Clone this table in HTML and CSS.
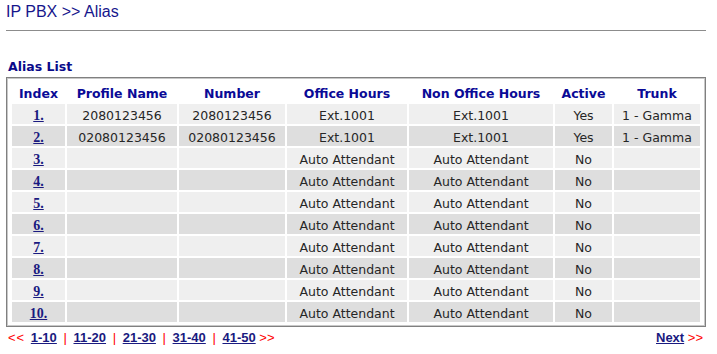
FILE: index.html
```html
<!DOCTYPE html>
<html>
<head>
<meta charset="utf-8">
<title>IP PBX &gt;&gt; Alias</title>
<link rel="stylesheet" href="styles.css">
</head>
<body>
<div class="page">
  <h1 class="title">IP PBX &gt;&gt; Alias</h1>
  <div class="rule"></div>
  <div class="list-title">Alias List</div>
  <table class="alias">
    <colgroup>
      <col class="c-index"><col class="c-profile"><col class="c-number"><col class="c-office"><col class="c-non"><col class="c-active"><col class="c-trunk">
    </colgroup>
    <thead>
      <tr><th>Index</th><th>Profile Name</th><th>Number</th><th>Office Hours</th><th>Non Office Hours</th><th>Active</th><th>Trunk</th></tr>
    </thead>
    <tbody>
      <tr class="odd"><td><a class="idx" href="#">1.</a></td><td>2080123456</td><td>2080123456</td><td>Ext.1001</td><td>Ext.1001</td><td>Yes</td><td>1 - Gamma</td></tr>
      <tr class="even"><td><a class="idx" href="#">2.</a></td><td>02080123456</td><td>02080123456</td><td>Ext.1001</td><td>Ext.1001</td><td>Yes</td><td>1 - Gamma</td></tr>
      <tr class="odd"><td><a class="idx" href="#">3.</a></td><td></td><td></td><td>Auto Attendant</td><td>Auto Attendant</td><td>No</td><td></td></tr>
      <tr class="even"><td><a class="idx" href="#">4.</a></td><td></td><td></td><td>Auto Attendant</td><td>Auto Attendant</td><td>No</td><td></td></tr>
      <tr class="odd"><td><a class="idx" href="#">5.</a></td><td></td><td></td><td>Auto Attendant</td><td>Auto Attendant</td><td>No</td><td></td></tr>
      <tr class="even"><td><a class="idx" href="#">6.</a></td><td></td><td></td><td>Auto Attendant</td><td>Auto Attendant</td><td>No</td><td></td></tr>
      <tr class="odd"><td><a class="idx" href="#">7.</a></td><td></td><td></td><td>Auto Attendant</td><td>Auto Attendant</td><td>No</td><td></td></tr>
      <tr class="even"><td><a class="idx" href="#">8.</a></td><td></td><td></td><td>Auto Attendant</td><td>Auto Attendant</td><td>No</td><td></td></tr>
      <tr class="odd"><td><a class="idx" href="#">9.</a></td><td></td><td></td><td>Auto Attendant</td><td>Auto Attendant</td><td>No</td><td></td></tr>
      <tr class="even"><td><a class="idx" href="#">10.</a></td><td></td><td></td><td>Auto Attendant</td><td>Auto Attendant</td><td>No</td><td></td></tr>
    </tbody>
  </table>
  <div class="pager">
    <div class="pages"><span class="arrow first">&lt;&lt;</span> <a href="#">1-10</a> <span class="sep">|</span> <a href="#">11-20</a> <span class="sep">|</span> <a href="#">21-30</a> <span class="sep">|</span> <a href="#">31-40</a> <span class="sep">|</span> <a href="#">41-50</a> <span class="arrow">&gt;&gt;</span></div>
    <div class="next"><a href="#">Next</a> <span class="arrow">&gt;&gt;</span></div>
  </div>
</div>
</body>
</html>
```

FILE: styles.css
```css
html, body {
  margin: 0;
  padding: 0;
  background: #ffffff;
}

.page {
  width: 700px;
  padding: 3px 0 0 6px;
  font-family: "DejaVu Sans", Verdana, sans-serif;
}

.title {
  margin: 0;
  font: normal 16px/18px "Liberation Sans", Arial, sans-serif;
  color: #16168c;
}

.rule {
  height: 1px;
  margin-top: 9px;
  background: #8c8c8c;
}

.list-title {
  margin-top: 28px;
  padding-left: 2px;
  font-size: 12.5px;
  line-height: 15px;
  font-weight: bold;
  color: #0a0a8a;
}

.alias {
  margin-top: 3px;
  width: 700px;
  table-layout: fixed;
  border-collapse: separate;
  border-spacing: 2px;
  border: 1px solid #808080;
  box-shadow: inset 0 0 0 1px #c8c8c8;
  padding: 2px 3px;
  font-size: 12.5px;
  color: #262626;
}

.c-index { width: 53px; }
.c-profile { width: 110px; }
.c-number { width: 106px; }
.c-office { width: 120px; }
.c-non { width: 144px; }
.c-active { width: 57px; }
.c-trunk { width: 86px; }

.alias th,
.alias td {
  height: 16px;
  padding: 4px 0 0 0;
  line-height: 16px;
  text-align: center;
  white-space: nowrap;
  overflow: hidden;
}

.alias th {
  font-weight: bold;
  color: #0a0a96;
}

.alias tr.odd td { background: #efefef; }
.alias tr.even td { background: #dedede; }

.idx {
  font-family: "Liberation Serif", "Times New Roman", serif;
  font-weight: bold;
  font-size: 14px;
  color: #1a1a80;
  text-decoration: underline;
}

.pager {
  display: flex;
  justify-content: space-between;
  align-items: baseline;
  margin-top: 2px;
  padding: 0 3px 0 2px;
  font: normal 13px/18px "Liberation Sans", Arial, sans-serif;
}

.pager a {
  font-weight: bold;
  color: #1a1a80;
  text-decoration: underline;
}

.arrow,
.sep {
  color: #ff0000;
}

.pages .first {
  margin-right: 2px;
  letter-spacing: 1px;
}

.pages .sep {
  margin: 0 3px;
}
```
